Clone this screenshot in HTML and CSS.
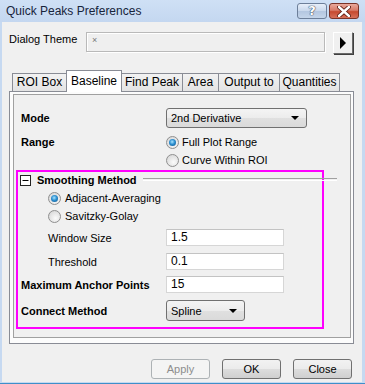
FILE: index.html
```html
<!DOCTYPE html>
<html>
<head>
<meta charset="utf-8">
<link rel="stylesheet" href="styles.css">
</head>
<body>
<div class="window">
  <div class="titlebar">
    <span class="title">Quick Peaks Preferences</span>
    <div class="caption-btns">
      <div class="cap help"><span class="qmark">?</span></div>
      <div class="cap close">
        <svg width="14" height="11" viewBox="0 0 14 11"><path d="M2 1 L12 10 M12 1 L2 10" stroke="#5a1a10" stroke-width="4.2" stroke-linecap="round"/><path d="M2 1 L12 10 M12 1 L2 10" stroke="#fff" stroke-width="2.4" stroke-linecap="round"/></svg>
      </div>
    </div>
  </div>
  <div class="client">
    <div class="theme-row">
      <span class="theme-label">Dialog Theme</span>
      <div class="theme-input"><span class="x">×</span></div>
      <div class="arrow-btn"><svg width="8" height="12" viewBox="0 0 8 12"><path d="M1 0 L7 6 L1 12 Z" fill="#000"/></svg></div>
    </div>
    <div class="tabs">
      <div class="tab w-roi">ROI Box</div>
      <div class="tab sel w-base">Baseline</div>
      <div class="tab w-find">Find Peak</div>
      <div class="tab w-area">Area</div>
      <div class="tab w-out">Output to</div>
      <div class="tab w-qty">Quantities</div>
    </div>
    <div class="panel">
      <div class="frame">
        <div class="row r-mode">
          <span class="lbl bold">Mode</span>
          <div class="combo w-mode"><span>2nd Derivative</span><span class="caret"></span></div>
        </div>
        <div class="row r-range">
          <span class="lbl bold">Range</span>
          <div class="opt"><span class="radio on"></span><span>Full Plot Range</span></div>
        </div>
        <div class="row r-range2">
          <span class="lbl"></span>
          <div class="opt"><span class="radio"></span><span>Curve Within ROI</span></div>
        </div>
        <div class="highlight">
          <div class="group-head">
            <svg class="toggle" width="11" height="11" viewBox="0 0 11 11"><rect x="0.5" y="0.5" width="10" height="10" fill="#fff" stroke="#222"/><path d="M2.5 5.5 H8.5" stroke="#000"/></svg>
            <span class="bold">Smoothing Method</span>
            <span class="group-line"></span>
          </div>
          <div class="row r-sub sub">
            <div class="opt"><span class="radio on"></span><span>Adjacent-Averaging</span></div>
          </div>
          <div class="row r-sub sub">
            <div class="opt"><span class="radio"></span><span>Savitzky-Golay</span></div>
          </div>
          <div class="row r-ws sub">
            <span class="lbl sublbl">Window Size</span>
            <div class="edit">1.5</div>
          </div>
          <div class="row r-th sub">
            <span class="lbl sublbl">Threshold</span>
            <div class="edit">0.1</div>
          </div>
          <div class="row r-max">
            <span class="lbl bold">Maximum Anchor Points</span>
            <div class="edit">15</div>
          </div>
          <div class="row r-conn">
            <span class="lbl bold">Connect Method</span>
            <div class="combo w-conn"><span>Spline</span><span class="caret"></span></div>
          </div>
        </div>
      </div>
    </div>
    <div class="buttons">
      <div class="btn disabled">Apply</div>
      <div class="btn">OK</div>
      <div class="btn">Close</div>
    </div>
  </div>
</div>
</body>
</html>
```
FILE: styles.css
```css
html, body {
  margin: 0;
  padding: 0;
}
body {
  width: 365px;
  height: 384px;
  overflow: hidden;
  font-family: "Liberation Sans", Arial, sans-serif;
  font-size: 11px;
  color: #000;
}
.window {
  width: 365px;
  height: 384px;
  box-sizing: border-box;
  background: #c6d9f1;
  display: flex;
  flex-direction: column;
  border-bottom: 1px solid #3f8fc9;
}
.titlebar {
  height: 22px;
  display: flex;
  align-items: center;
  justify-content: space-between;
  background: linear-gradient(#cfe0f5, #c4d7f0);
}
.title {
  margin-left: 6px;
  font-size: 12px;
  color: #17243b;
  padding-bottom: 1px;
}
.caption-btns {
  display: flex;
  gap: 2px;
  margin-right: 6px;
  align-self: flex-start;
  margin-top: 3px;
}
.cap {
  width: 30px;
  height: 16px;
  border: 1px solid #6d7f99;
  border-radius: 3px;
  box-sizing: border-box;
  display: flex;
  align-items: center;
  justify-content: center;
}
.help {
  width: 30px;
  background: linear-gradient(#e6eef9 0%, #c9d8ec 50%, #b3c6e0 51%, #c4d5ea 100%);
}
.qmark {
  font-family: "DejaVu Sans", sans-serif;
  font-weight: bold;
  font-size: 13px;
  color: #fff;
  text-shadow: 0 0 1px #3a4a63, 0 0 1px #3a4a63, 0 0 1px #3a4a63;
  line-height: 14px;
}
.close {
  border-color: #7a3328;
  background: linear-gradient(#e9a99c 0%, #d87a68 45%, #c6492f 55%, #d6705a 100%);
}
.client {
  flex: 1;
  margin: 0 3px 1px 2px;
  background: #f0f0f0;
  display: flex;
  flex-direction: column;
}
.theme-row {
  display: flex;
  align-items: flex-start;
  padding: 10px 0 0 7px;
}
.theme-label {
  width: 77px;
  line-height: 14px;
  margin-top: 0px;
}
.theme-input {
  width: 239px;
  height: 20px;
  box-sizing: border-box;
  border: 1px solid #b9b9b9;
  box-shadow: inset 1px 1px 0 #fff, 1px 1px 0 #fff;
  background: #efefef;
  padding-left: 5px;
}
.theme-input .x {
  font-size: 9px;
  color: #777;
  line-height: 14px;
}
.arrow-btn {
  width: 20px;
  height: 22px;
  box-sizing: border-box;
  margin-left: 8px;
  border: 1px solid #fff;
  border-right-color: #696969;
  border-bottom-color: #696969;
  box-shadow: 1px 1px 0 #404040;
  background: #f0f0f0;
  display: flex;
  align-items: center;
  justify-content: center;
}
.tabs {
  display: flex;
  align-items: flex-end;
  height: 21px;
  margin: 16px 0 0 10px;
}
.tab {
  height: 18px;
  box-sizing: border-box;
  border: 1px solid #898c95;
  border-bottom: none;
  margin-right: -1px;
  background: linear-gradient(#f2f2f2, #e3e3e3);
  font-size: 12px;
  line-height: 16px;
  text-align: center;
  color: #000;
}
.tab.sel {
  height: 22px;
  margin-bottom: -1px;
  background: #fff;
  position: relative;
  z-index: 1;
  line-height: 20px;
}
.w-roi { width: 55px; }
.w-base { width: 56px; }
.w-find { width: 62px; }
.w-area { width: 37px; }
.w-out { width: 62px; }
.w-qty { width: 61px; }
.panel {
  margin-left: 7px;
  width: 345px;
  height: 253px;
  box-sizing: border-box;
  border: 1px solid #898c95;
  background: #fcfcfc;
  padding: 2px 2px 5px 3px;
}
.frame {
  height: 100%;
  box-sizing: border-box;
  border: 1px solid #a0a0a0;
  background: #f0f0f0;
  padding: 13px 0 0 7px;
}
.row {
  display: flex;
  align-items: center;
}
.lbl {
  width: 145px;
  flex: none;
}
.bold {
  font-weight: bold;
}
.r-mode { height: 20px; }
.r-range { height: 18px; margin-top: 5px; }
.r-range2 { height: 18px; }
.combo {
  height: 20px;
  box-sizing: border-box;
  border: 1px solid #707070;
  border-radius: 3px;
  background: linear-gradient(#f4f4f4 0%, #ececec 50%, #e0e0e0 51%, #dadada 100%);
  display: flex;
  align-items: center;
  justify-content: space-between;
  padding: 0 7px 0 4px;
}
.w-mode { width: 141px; }
.w-conn { width: 79px; height: 21px; }
.caret {
  width: 0;
  height: 0;
  border-left: 4px solid transparent;
  border-right: 4px solid transparent;
  border-top: 4px solid #000;
}
.opt {
  display: flex;
  align-items: center;
  gap: 3px;
}
.radio {
  width: 13px;
  height: 13px;
  box-sizing: border-box;
  border-radius: 50%;
  border: 1px solid #8f8f8f;
  background: radial-gradient(circle at 60% 65%, #fbfbfb 0%, #e2e2e2 60%, #cfcfcf 100%);
  display: flex;
  align-items: center;
  justify-content: center;
}
.radio.on::after {
  content: "";
  width: 7px;
  height: 7px;
  border-radius: 50%;
  background: radial-gradient(circle at 45% 40%, #a9e4ff 0%, #2c8fd0 45%, #0c4f86 100%);
}
.highlight {
  width: 308px;
  box-sizing: border-box;
  border: 2px solid #ff00ff;
  margin: 1px 0 0 -5px;
  height: 159px;
  padding: 0 0 0 2px;
}
.group-head {
  height: 16px;
  display: flex;
  align-items: center;
  gap: 6px;
  margin-right: -15px;
}
.toggle {
  flex: none;
  margin-top: 1px;
}
.group-line {
  flex: 1;
  height: 1px;
  border-top: 1px solid #a0a0a0;
  border-bottom: 1px solid #fff;
  margin: 0 0 2px 0;
}
.sub {
  padding-left: 28px;
}
.sublbl {
  width: 118px;
}
.r-sub { height: 18px; }
.r-sub:nth-child(2) { margin-top: 1px; }
.r-sub .opt { gap: 4px; }
.r-ws { height: 17px; margin-top: 4px; }
.r-th { height: 17px; margin-top: 7px; }
.r-max { height: 17px; margin-top: 6px; padding-left: 1px; }
.r-conn { height: 21px; margin-top: 7px; padding-left: 1px; }
.edit {
  width: 118px;
  height: 17px;
  box-sizing: border-box;
  border: 1px solid #d6d6d6;
  border-top-color: #c3c3c3;
  background: #fff;
  padding-left: 4px;
  font-size: 12px;
  line-height: 15px;
}
.buttons {
  display: flex;
  justify-content: flex-end;
  gap: 12px;
  padding-right: 10px;
  margin-top: 15px;
}
.btn {
  width: 59px;
  height: 20px;
  box-sizing: border-box;
  border: 1px solid #707070;
  border-radius: 3px;
  background: linear-gradient(#f2f2f2 0%, #ebebeb 50%, #dddddd 51%, #cfcfcf 100%);
  text-align: center;
  line-height: 18px;
}
.btn.disabled {
  border-color: #adb2b5;
  background: #f4f4f4;
  color: #8d8d8d;
}
```
